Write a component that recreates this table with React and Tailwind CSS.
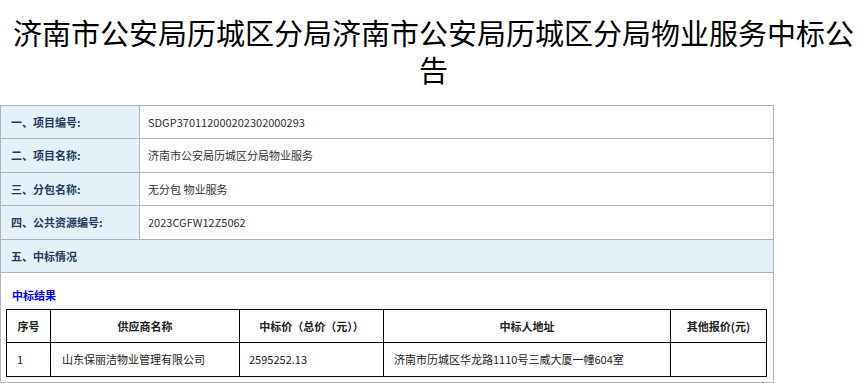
import React from "react";

const info = [
  { label: "一、项目编号:", value: "SDGP370112000202302000293", h: "h-[33px]" },
  { label: "二、项目名称:", value: "济南市公安局历城区分局物业服务", h: "h-[34px]" },
  { label: "三、分包名称:", value: "无分包 物业服务", h: "h-[33px]" },
  { label: "四、公共资源编号:", value: "2023CGFW12Z5062", h: "h-[34px]" },
];

const font = { fontFamily: '"Noto Sans CJK SC", "Liberation Sans", sans-serif' };

export default function App() {
  return (
    <div className="w-[867px] min-h-[383px] bg-white" style={font}>
      {/* Title */}
      <h1 className="pt-[14px] text-center text-[29px] leading-[37px] font-normal text-black">
        济南市公安局历城区分局济南市公安局历城区分局物业服务中标公告
      </h1>

      {/* Info table */}
      <table className="mt-[17px] w-[774px] border-collapse border border-[#b1b3ba] text-[11px]">
        <tbody>
          {info.map((row) => (
            <tr key={row.label} className={row.h}>
              <td className="w-[139px] border border-[#b1b3ba] bg-[#e4f1f8] pl-[10px] font-bold text-[#1f3864]">
                {row.label}
              </td>
              <td className="border border-[#b1b3ba] pl-[8px] text-[#333]">{row.value}</td>
            </tr>
          ))}
          <tr className="h-[33px]">
            <td colSpan={2} className="border border-[#b1b3ba] bg-[#e4f1f8] pl-[10px] font-bold text-[#1f3864]">
              五、中标情况
            </td>
          </tr>
          <tr>
            <td colSpan={2} className="border border-[#b1b3ba] pt-[15px] pb-[5px] pl-[5px] pr-[6px]">
              <p className="mb-[6px] pl-[6px] text-[11px] font-bold leading-[15px] text-[#0000ff]">中标结果</p>
              <table className="w-full border-collapse border border-black text-[11px] text-[#222]">
                <thead>
                  <tr className="h-[33px] font-bold">
                    <th className="w-[44px] border border-black">序号</th>
                    <th className="w-[189px] border border-black">供应商名称</th>
                    <th className="w-[144px] border border-black">中标价（总价（元））</th>
                    <th className="w-[287px] border border-black">中标人地址</th>
                    <th className="border border-black">其他报价(元)</th>
                  </tr>
                </thead>
                <tbody>
                  <tr className="h-[34px]">
                    <td className="border border-black pl-[10px]">1</td>
                    <td className="border border-black pl-[11px]">山东保丽洁物业管理有限公司</td>
                    <td className="border border-black pl-[9px]">2595252.13</td>
                    <td className="border border-black pl-[10px]">济南市历城区华龙路1110号三威大厦一幢604室</td>
                    <td className="border border-black"></td>
                  </tr>
                </tbody>
              </table>
            </td>
          </tr>
        </tbody>
      </table>
    </div>
  );
}
